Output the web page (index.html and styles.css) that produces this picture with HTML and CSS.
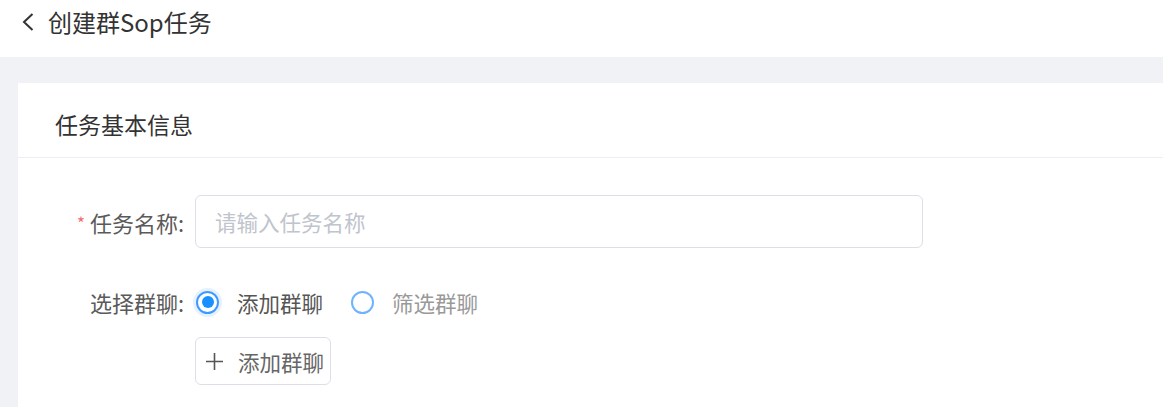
FILE: index.html
```html
<!DOCTYPE html>
<html lang="zh">
<head>
<meta charset="utf-8">
<link rel="stylesheet" href="styles.css">
</head>
<body>
<header class="topbar">
  <svg class="back" width="14" height="18" viewBox="0 0 14 18"><path d="M11.5 1 L3 9 L11.5 17" fill="none" stroke="#333" stroke-width="2"/></svg>
  <span class="page-title">创建群Sop任务</span>
</header>
<main class="main">
  <section class="card">
    <div class="card-head">任务基本信息</div>
    <div class="card-body">
      <div class="row">
        <label class="label"><span class="req">*</span>任务名称:</label>
        <div class="input">请输入任务名称</div>
      </div>
      <div class="row row-radio">
        <label class="label">选择群聊:</label>
        <div class="radios">
          <span class="radio checked"><span class="dot"></span></span>
          <span class="radio-text active">添加群聊</span>
          <span class="radio"></span>
          <span class="radio-text">筛选群聊</span>
        </div>
      </div>
      <div class="row row-btn">
        <span class="label"></span>
        <button class="btn"><svg class="plus" width="17" height="17" viewBox="0 0 17 17"><path d="M8.5 0 V17 M0 8.5 H17" stroke="#555" stroke-width="1.6" fill="none"/></svg>添加群聊</button>
      </div>
    </div>
  </section>
</main>
</body>
</html>
```
FILE: styles.css
```css
* { box-sizing: border-box; }
html, body { margin: 0; padding: 0; }
body {
  background: #fff;
  font-family: "Noto Sans CJK SC", "Noto Sans", sans-serif;
  width: 1163px;
  height: 407px;
  overflow: hidden;
}
.topbar {
  height: 57px;
  display: flex;
  align-items: center;
  padding-left: 21px;
  padding-bottom: 13px;
  gap: 13px;
}
.back { display: block; }
.page-title {
  font-size: 24px;
  color: #333;
  line-height: 1;
}
.main {
  background: #f0f2f5;
  padding: 26px 0 0 18px;
  height: 350px;
}
.card {
  background: #fff;
  height: 100%;
}
.card-head {
  height: 75px;
  display: flex;
  align-items: center;
  padding-left: 37px;
  padding-top: 8px;
  font-size: 23px;
  color: #333;
  border-bottom: 1px solid #ebeef5;
}
.card-body {
  padding-top: 37px;
}
.row {
  display: flex;
  align-items: center;
}
.label {
  width: 166px;
  margin-right: 11px;
  text-align: right;
  font-size: 22px;
  color: #5a5a5a;
}
.req {
  color: #f56c6c;
  font-size: 17px;
  margin-right: 5px;
  vertical-align: 2px;
}
.input {
  width: 728px;
  height: 53px;
  border: 1px solid #dcdfe6;
  border-radius: 6px;
  display: flex;
  align-items: center;
  padding-left: 19px;
  font-size: 21.5px;
  color: #c0c4cc;
}
.row-radio {
  margin-top: 32px;
  height: 44px;
}
.radios {
  display: flex;
  align-items: center;
}
.radio {
  width: 23px;
  height: 23px;
  border: 2px solid #6fb3ff;
  border-radius: 50%;
  display: flex;
  align-items: center;
  justify-content: center;
  margin-left: 1px;
}
.radio.checked {
  border-color: #3d9aff;
  box-shadow: 0 0 0 3px #e6f1ff;
}
.dot {
  width: 12px;
  height: 12px;
  border-radius: 50%;
  background: #1890ff;
}
.radio-text {
  font-size: 21.5px;
  color: #999;
  margin-left: 18px;
  margin-right: 27px;
}
.radio-text.active { color: #555; }
.row-btn {
  margin-top: 13px;
}
.btn {
  width: 136px;
  height: 48px;
  border: 1px solid #dcdfe6;
  border-radius: 6px;
  background: #fff;
  display: flex;
  align-items: center;
  padding: 0 0 0 10px;
  font-family: inherit;
  font-size: 21.5px;
  color: #666;
}
.plus {
  display: block;
  margin-right: 15px;
}
```
